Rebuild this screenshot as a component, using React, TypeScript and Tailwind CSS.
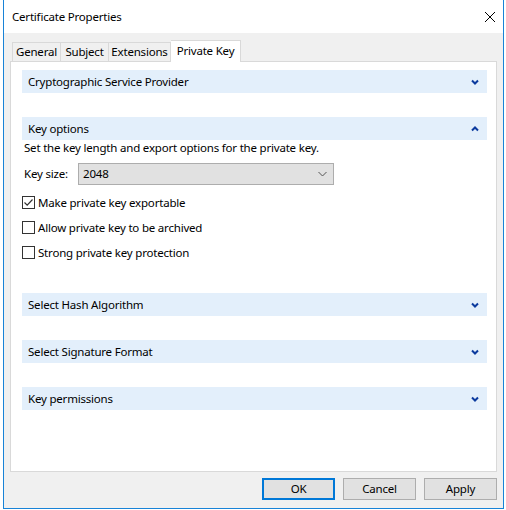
import React from 'react';

const font = { fontFamily: '"Noto Sans", "Open Sans", sans-serif' };

const Chevron = ({ up = false }: { up?: boolean }) => (
  <svg width="8" height="6" viewBox="0 0 8 6" fill="none">
    <path
      d={up ? 'M1 4.5 L4 1.5 L7 4.5' : 'M1 1.5 L4 4.5 L7 1.5'}
      stroke="#0b3a9e"
      strokeWidth="2"
    />
  </svg>
);

const SectionHeader = ({ title, open = false, className = '' }: { title: string; open?: boolean; className?: string }) => (
  <div className={`h-[23px] bg-[#e3effb] flex items-center justify-between pl-[6px] pr-[8px] ${className}`}>
    <span className="text-[11.5px] tracking-[-0.2px] text-black">{title}</span>
    <Chevron up={open} />
  </div>
);

const Checkbox = ({ label, checked = false }: { label: string; checked?: boolean }) => (
  <div className="h-[25px] flex items-center gap-[3px]">
    <div className="w-[13px] h-[13px] border border-[#333] bg-white flex items-center justify-center">
      {checked && (
        <svg width="11" height="11" viewBox="0 0 11 11" fill="none">
          <path d="M1.5 5.5 L4.2 8.2 L9.5 2.5" stroke="#333" strokeWidth="1.2" />
        </svg>
      )}
    </div>
    <span className="text-[11.5px] tracking-[-0.2px] text-black">{label}</span>
  </div>
);

const Button = ({ label, primary = false }: { label: string; primary?: boolean }) => (
  <button
    className={`w-[73px] h-[22px] bg-[#e1e1e1] text-[11.5px] tracking-[-0.2px] text-black flex items-center justify-center ${
      primary ? 'border-2 border-[#0078d7]' : 'border border-[#adadad]'
    }`}
  >
    {label}
  </button>
);

const App: React.FC = () => {
  return (
    <div className="w-[506px] h-[510px] bg-white text-[11.5px] tracking-[-0.2px]" style={font}>
      <div className="ml-[3px] w-[501px] h-[509px] flex flex-col border-x border-b border-[#1883d7]">
        {/* Title bar */}
        <div className="h-[33px] bg-white flex items-center justify-between pl-[8px] pr-[7px]">
          <span className="text-black">Certificate Properties</span>
          <svg width="12" height="12" viewBox="0 0 12 12" fill="none">
            <path d="M1 1 L11 11 M11 1 L1 11" stroke="#000" strokeWidth="1" />
          </svg>
        </div>

        {/* Body */}
        <div className="flex-1 bg-[#f0f0f0] flex flex-col pt-[7px] pl-[6px] pr-[6px]">
          {/* Tabs */}
          <div className="flex items-end pl-[2px]">
            <div className="w-[48px] h-[19px] border border-b-0 border-r-0 border-[#d9d9d9] flex items-center justify-center text-black">
              General
            </div>
            <div className="w-[48px] h-[19px] border border-b-0 border-r-0 border-[#d9d9d9] flex items-center justify-center text-black">
              Subject
            </div>
            <div className="w-[63px] h-[19px] border border-b-0 border-[#d9d9d9] flex items-center justify-center text-black">
              Extensions
            </div>
            <div className="w-[70px] h-[22px] -mb-px relative z-10 bg-white border border-b-0 border-l-0 border-[#d9d9d9] flex items-start justify-center pt-[1px] text-black">
              Private Key
            </div>
          </div>

          {/* Panel */}
          <div className="h-[411px] bg-white border border-[#d9d9d9] pt-[8px] pl-[11px] pr-[9px] flex flex-col">
            <SectionHeader title="Cryptographic Service Provider" />
            <SectionHeader title="Key options" open className="mt-[24px]" />
            <div className="pl-[2px] h-[16px] leading-[16px] text-black">
              Set the key length and export options for the private key.
            </div>
            <div className="mt-[7px] h-[22px] flex items-center pl-[2px]">
              <span className="w-[54px] text-black">Key size:</span>
              <div className="w-[256px] h-[22px] bg-[#e1e1e1] border border-[#adadad] flex items-center justify-between pl-[4px] pr-[6px]">
                <span className="text-black">2048</span>
                <svg width="9" height="6" viewBox="0 0 9 6" fill="none">
                  <path d="M0.5 1 L4.5 5 L8.5 1" stroke="#555" strokeWidth="1" />
                </svg>
              </div>
            </div>
            <div className="mt-[5px] flex flex-col">
              <Checkbox label="Make private key exportable" checked />
              <Checkbox label="Allow private key to be archived" />
              <Checkbox label="Strong private key protection" />
            </div>
            <SectionHeader title="Select Hash Algorithm" className="mt-[28px]" />
            <SectionHeader title="Select Signature Format" className="mt-[24px]" />
            <SectionHeader title="Key permissions" className="mt-[24px]" />
          </div>

          {/* Footer */}
          <div className="flex justify-end gap-[8px] pt-[6px]">
            <Button label="OK" primary />
            <Button label="Cancel" />
            <Button label="Apply" />
          </div>
        </div>
      </div>
    </div>
  );
};

export default App;
